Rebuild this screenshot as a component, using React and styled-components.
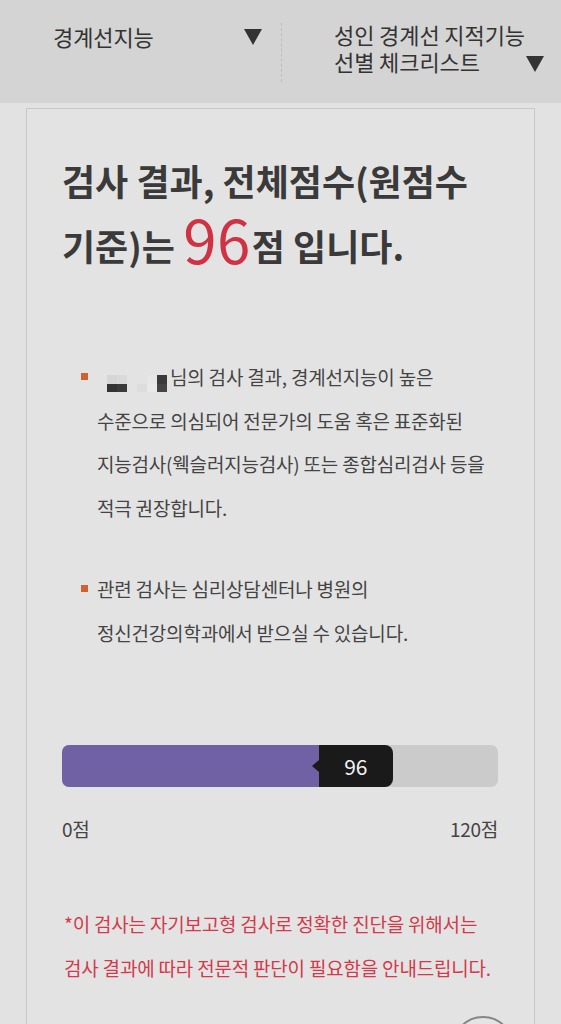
import React from "react";
import styled, { createGlobalStyle } from "styled-components";

const Global = createGlobalStyle`
  html, body { margin: 0; padding: 0; background: #e2e2e2; }
  body { font-family: "Noto Sans CJK KR", "Noto Sans", sans-serif; color: #444; }
  * { box-sizing: border-box; }
`;

const Page = styled.div`
  min-height: 1024px;
  background: #e2e2e2;
  overflow: hidden;
`;

const Header = styled.header`
  height: 103px;
  background: #d4d4d4;
  display: grid;
  grid-template-columns: 281px 1fr;
  align-items: start;
`;

const Select = styled.div`
  display: flex;
  align-items: flex-start;
  justify-content: space-between;
  padding: ${(p) => (p.$first ? "23px 19px 0 53px" : "0 17px 0 52px")};
  border-left: ${(p) => (p.$first ? "none" : "1px dashed #bdbdbd")};
  height: ${(p) => (p.$first ? "auto" : "59px")};
  margin-top: ${(p) => (p.$first ? "0" : "23px")};
`;

const SelectText = styled.div`
  font-size: 22px;
  line-height: 27px;
  letter-spacing: -0.1px;
  color: #333;
  margin-top: ${(p) => (p.$shift ? "-2px" : "0")};
`;

const Arrow = styled.span`
  margin-top: ${(p) => (p.$low ? "33px" : "6px")};
  width: 0;
  height: 0;
  border-left: 9px solid transparent;
  border-right: 9px solid transparent;
  border-top: 16px solid #333;
`;

const Card = styled.section`
  margin: 5px 26px 0;
  border: 1px solid #c8c8c8;
  border-bottom: none;
  background: #e3e3e3;
  padding: 39px 36px 60px 35px;
  min-height: 920px;
`;

const Title = styled.h1`
  margin: 0;
  font-size: 36px;
  font-weight: 700;
  line-height: 65px;
  letter-spacing: 0;
  color: #3a3a3a;
`;

const Score = styled.span`
  font-size: 60px;
  font-weight: 400;
  letter-spacing: 0.5px;
  color: #cf3343;
  line-height: 0;
  vertical-align: -3px;
  margin: 0 1px 0 0;
`;

const Notes = styled.div`
  margin-top: 77px;
  display: flex;
  flex-direction: column;
  gap: 38px;
`;

const Note = styled.p`
  position: relative;
  margin: 0;
  padding-left: 35px;
  font-size: 19px;
  line-height: 43.5px;
  letter-spacing: -0.2px;
  color: #444;
  &::before {
    content: "";
    position: absolute;
    left: 19px;
    top: 18px;
    width: 7px;
    height: 7px;
    background: #cf622f;
  }
`;

const Mosaic = styled.span`
  display: inline-grid;
  grid-template-columns: repeat(7, 10px);
  grid-template-rows: 9px 8px;
  vertical-align: 1px;
  margin-right: 3px;
`;

const Pixel = styled.span`
  background: ${(p) => p.$c};
`;

const Bar = styled.div`
  margin-top: 91px;
  height: 42px;
  border-radius: 7px;
  background: #cbcbcb;
  display: flex;
`;

const Fill = styled.div`
  display: flex;
  height: 100%;
`;

const Purple = styled.div`
  flex: 1;
  background: #7060a4;
  border-radius: 7px 0 0 7px;
`;

const Tip = styled.div`
  position: relative;
  width: 74px;
  background: #1a1a1a;
  border-radius: 0 8px 8px 0;
  color: #f2f2f2;
  font-size: 21px;
  display: flex;
  align-items: center;
  justify-content: center;
  &::before {
    content: "";
    position: absolute;
    left: -7px;
    top: 50%;
    margin-top: -6px;
    border-top: 6px solid transparent;
    border-bottom: 6px solid transparent;
    border-right: 7px solid #1a1a1a;
  }
`;

const Scale = styled.div`
  margin-top: 30px;
  display: flex;
  justify-content: space-between;
  font-size: 19px;
  line-height: 24px;
  letter-spacing: -0.3px;
  color: #444;
`;

const Warn = styled.p`
  margin: 61px 0 0;
  padding-left: 2px;
  font-size: 19px;
  line-height: 44px;
  letter-spacing: -0.2px;
  color: #d23a4c;
`;

const TopButton = styled.div`
  position: fixed;
  left: 452px;
  top: 1016px;
  width: 62px;
  height: 62px;
  border-radius: 50%;
  border: 2px solid #858585;
  background: #e4e4e4;
`;

const mosaic = [
  "#e3e3e3", "#d6d6d6", "#d9d9d9", "#e3e3e3", "#e3e3e3", "#e6e6e6", "#3a3a3a",
  "#e3e3e3", "#333333", "#3a3a3a", "#e3e3e3", "#dddddd", "#e9e9e9", "#444444",
];

export default function App() {
  const value = 96;
  const max = 120;
  const pct = (value / max) * 100;
  return (
    <Page>
      <Global />
      <Header>
        <Select $first>
          <SelectText>경계선지능</SelectText>
          <Arrow />
        </Select>
        <Select>
          <SelectText $shift>
            성인 경계선 지적기능
            <br />
            선별 체크리스트
          </SelectText>
          <Arrow $low />
        </Select>
      </Header>
      <Card>
        <Title>
          검사 결과, 전체점수(원점수
          <br />
          기준)는 <Score>96</Score>점 입니다.
        </Title>
        <Notes>
          <Note>
            <Mosaic>
              {mosaic.map((c, i) => (
                <Pixel key={i} $c={c} />
              ))}
            </Mosaic>
            님의 검사 결과, 경계선지능이 높은
            <br />
            수준으로 의심되어 전문가의 도움 혹은 표준화된
            <br />
            지능검사(웩슬러지능검사) 또는 종합심리검사 등을
            <br />
            적극 권장합니다.
          </Note>
          <Note>
            관련 검사는 심리상담센터나 병원의
            <br />
            정신건강의학과에서 받으실 수 있습니다.
          </Note>
        </Notes>
        <Bar>
          <Fill style={{ width: `calc(${pct}% - 18px)` }}>
            <Purple />
            <Tip>{value}</Tip>
          </Fill>
        </Bar>
        <Scale>
          <span>0점</span>
          <span>{max}점</span>
        </Scale>
        <Warn>
          *이 검사는 자기보고형 검사로 정확한 진단을 위해서는
          <br />
          검사 결과에 따라 전문적 판단이 필요함을 안내드립니다.
        </Warn>
      </Card>
      <TopButton />
    </Page>
  );
}
